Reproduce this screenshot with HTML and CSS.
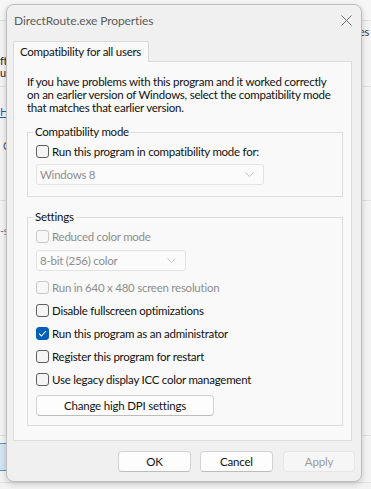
FILE: index.html
```html
<!DOCTYPE html>
<html>
<head>
  <title>DirectRoute.exe Properties</title>
  <link rel="stylesheet" href="styles.css">
</head>
<body>
<!-- window behind the dialog -->
<div class='backdrop'>
  <div class='bd-top'></div>
  <span class='bd-text bd-soft'>ft</span>
  <span class='bd-text bd-run'>u</span>
  <span class='bd-text bd-link'>He</span>
  <span class='bd-text bd-c'>C</span>
  <span class='bd-text bd-s'>-s</span>
  <span class='bd-text bd-es'>es</span>
  <div class='bd-line bd-l1'></div>
  <div class='bd-line bd-l2'></div>
  <div class='bd-line bd-l3'></div>
  <div class='bd-line bd-l4'></div>
  <div class='bd-button'></div>
</div>

<div class='dialog'>
  <div class='titlebar'>
    <span class='title'>DirectRoute.exe Properties</span>
    <svg class='close' width='11' height='11' viewBox='0 0 11 11'>
      <path d='M0.5 0.5 L10.5 10.5 M10.5 0.5 L0.5 10.5' stroke='#6e6e6e' stroke-width='1' fill='none'/>
    </svg>
  </div>

  <div class='tabs'>
    <div class='tab'>Compatibility for all users</div>
  </div>

  <div class='panel'>
    <p class='intro'>If you have problems with this program and it worked correctly on an earlier version of Windows, select the compatibility mode that matches that earlier version.</p>

    <fieldset class='group group-compat'>
      <legend>Compatibility mode</legend>
      <label class='check'>
        <span class='box'></span>
        Run this program in compatibility mode for:
      </label>
      <div class='select select-wide disabled'>
        <span>Windows 8</span>
        <svg class='chev' width='9' height='5' viewBox='0 0 9 5'><path d='M0.5 0.5 L4.5 4.5 L8.5 0.5' stroke='#c4c4c4' fill='none'/></svg>
      </div>
    </fieldset>

    <fieldset class='group group-settings'>
      <legend>Settings</legend>
      <label class='check disabled'>
        <span class='box'></span>
        Reduced color mode
      </label>
      <div class='select select-narrow disabled'>
        <span>8-bit (256) color</span>
        <svg class='chev' width='9' height='5' viewBox='0 0 9 5'><path d='M0.5 0.5 L4.5 4.5 L8.5 0.5' stroke='#c4c4c4' fill='none'/></svg>
      </div>
      <label class='check disabled after-select'>
        <span class='box'></span>
        Run in 640 x 480 screen resolution
      </label>
      <label class='check'>
        <span class='box'></span>
        Disable fullscreen optimizations
      </label>
      <label class='check'>
        <span class='box checked'>
          <svg width='9' height='7' viewBox='0 0 9 7'><path d='M1 3.6 L3.4 6 L8 1' stroke='#ffffff' stroke-width='1.1' fill='none'/></svg>
        </span>
        Run this program as an administrator
      </label>
      <label class='check'>
        <span class='box'></span>
        Register this program for restart
      </label>
      <label class='check'>
        <span class='box'></span>
        Use legacy display ICC color management
      </label>
      <button class='btn btn-dpi' type='button'>Change high DPI settings</button>
    </fieldset>
  </div>

  <div class='actions'>
    <button class='btn' type='button'>OK</button>
    <button class='btn' type='button'>Cancel</button>
    <button class='btn btn-disabled' type='button'>Apply</button>
  </div>
</div>
</body>
</html>
```

FILE: styles.css
```css
body {
    margin: 0;
    width: 371px;
    height: 489px;
    overflow: hidden;
    position: relative;
    background: #f3f3f3;
    font-family: 'Lato', sans-serif;
    font-size: 11.5px;
    letter-spacing: -0.25px;
    color: #111;
}

/* background window, mostly hidden */
.backdrop {
    position: absolute;
    inset: 0;
}

.bd-top {
    height: 20px;
    border-bottom: 1px solid #e3e3e3;
    background: #f6f6f6;
}

.bd-text {
    position: absolute;
    font-size: 11px;
    line-height: 13px;
    color: #222;
    white-space: nowrap;
}

.bd-soft { left: 0; top: 54px; }
.bd-run { left: 0; top: 66px; }
.bd-link { left: 0; top: 105px; color: #1a5fb4; text-decoration: underline; }
.bd-c { left: 3px; top: 139px; color: #555; }
.bd-s { left: 0; top: 224px; color: #777; }
.bd-es { left: 359px; top: 25px; color: #333; }

.bd-line {
    position: absolute;
    left: 0;
    width: 371px;
    border-top: 1px solid #e0e0e0;
}

.bd-l1 { top: 86px; }
.bd-l2 { top: 200px; }
.bd-l3 { top: 435px; }
.bd-l4 { top: 482px; }

.bd-button {
    position: absolute;
    left: -4px;
    top: 443px;
    width: 20px;
    height: 26px;
    background: #d3e4f3;
    border: 1px solid #4f8fd0;
}

/* dialog window */
.dialog {
    position: absolute;
    left: 6px;
    top: 4px;
    width: 354px;
    height: 476px;
    border: 1px solid #bdbdbd;
    border-radius: 8px;
    background: #f0f0f0;
    box-shadow: 0 2px 6px rgba(0, 0, 0, 0.18);
    display: flex;
    flex-direction: column;
}

.titlebar {
    height: 30px;
    display: flex;
    align-items: center;
    justify-content: space-between;
    padding: 0 9px 0 7px;
}

.title {
    color: #5c5c5c;
    font-size: 12px;
    letter-spacing: -0.1px;
}

.tabs {
    display: flex;
    padding: 6px 0 0 6px;
    margin-bottom: -1px;
    position: relative;
    z-index: 1;
}

.tab {
    height: 20px;
    line-height: 20px;
    padding: 0 7px 0 6px;
    border: 1px solid #d9d9d9;
    border-bottom: none;
    border-radius: 2px 2px 0 0;
    background: #f9f9f9;
    white-space: nowrap;
}

.panel {
    margin-left: 6px;
    width: 339px;
    height: 380px;
    box-sizing: border-box;
    border: 1px solid #dcdcdc;
    background: #f9f9f9;
    padding: 13px 10px 0 13px;
}

.intro {
    margin: 0;
    line-height: 13px;
}

.group {
    margin: 0;
    border: 1px solid #dcdcdc;
    padding: 0 8px;
    width: 316px;
    box-sizing: border-box;
}

.group legend {
    padding: 0 2px;
    margin-left: -3px;
    line-height: 16px;
}

.group-compat {
    margin-top: 10px;
    padding-bottom: 11px;
}

.group-settings {
    margin-top: 12px;
    padding-bottom: 9px;
}

.check {
    height: 23px;
    display: flex;
    align-items: center;
    gap: 3px;
    white-space: nowrap;
}

.check.disabled {
    color: #8d8d8d;
}

.box {
    width: 13px;
    height: 13px;
    box-sizing: border-box;
    border: 1px solid #5f5f5f;
    border-radius: 3px;
    background: #f4f4f4;
    display: flex;
    align-items: center;
    justify-content: center;
    flex-shrink: 0;
}

.check.disabled .box {
    border-color: #c8c8c8;
    background: #f7f7f7;
}

.box.checked {
    border-color: #005fb8;
    background: #005fb8;
}

.select {
    height: 21px;
    box-sizing: border-box;
    border: 1px solid #e3e3e3;
    border-radius: 3px;
    background: #fbfbfb;
    color: #8d8d8d;
    display: flex;
    align-items: center;
    justify-content: space-between;
    padding: 0 9px 0 3px;
}

.select-wide {
    width: 228px;
    margin-top: 1px;
}

.select-narrow {
    width: 150px;
    margin-top: 2px;
}

.after-select {
    margin-top: 5px;
}

.btn {
    height: 21px;
    box-sizing: border-box;
    border: 1px solid #d2d2d2;
    border-bottom-color: #bcbcbc;
    border-radius: 4px;
    background: #fdfdfd;
    font-family: 'Lato', sans-serif;
    font-size: 11.5px;
    letter-spacing: -0.2px;
    color: #111;
    padding: 0;
}

.btn-dpi {
    width: 178px;
    margin-top: 4px;
}

.actions {
    display: flex;
    justify-content: flex-end;
    gap: 9px;
    padding: 10px 6px 0 0;
}

.actions .btn {
    width: 73px;
}

.actions .btn-disabled {
    width: 72px;
    margin-left: 1px;
    background: #f6f6f6;
    border-color: #e5e5e5;
    color: #9d9d9d;
}
```
